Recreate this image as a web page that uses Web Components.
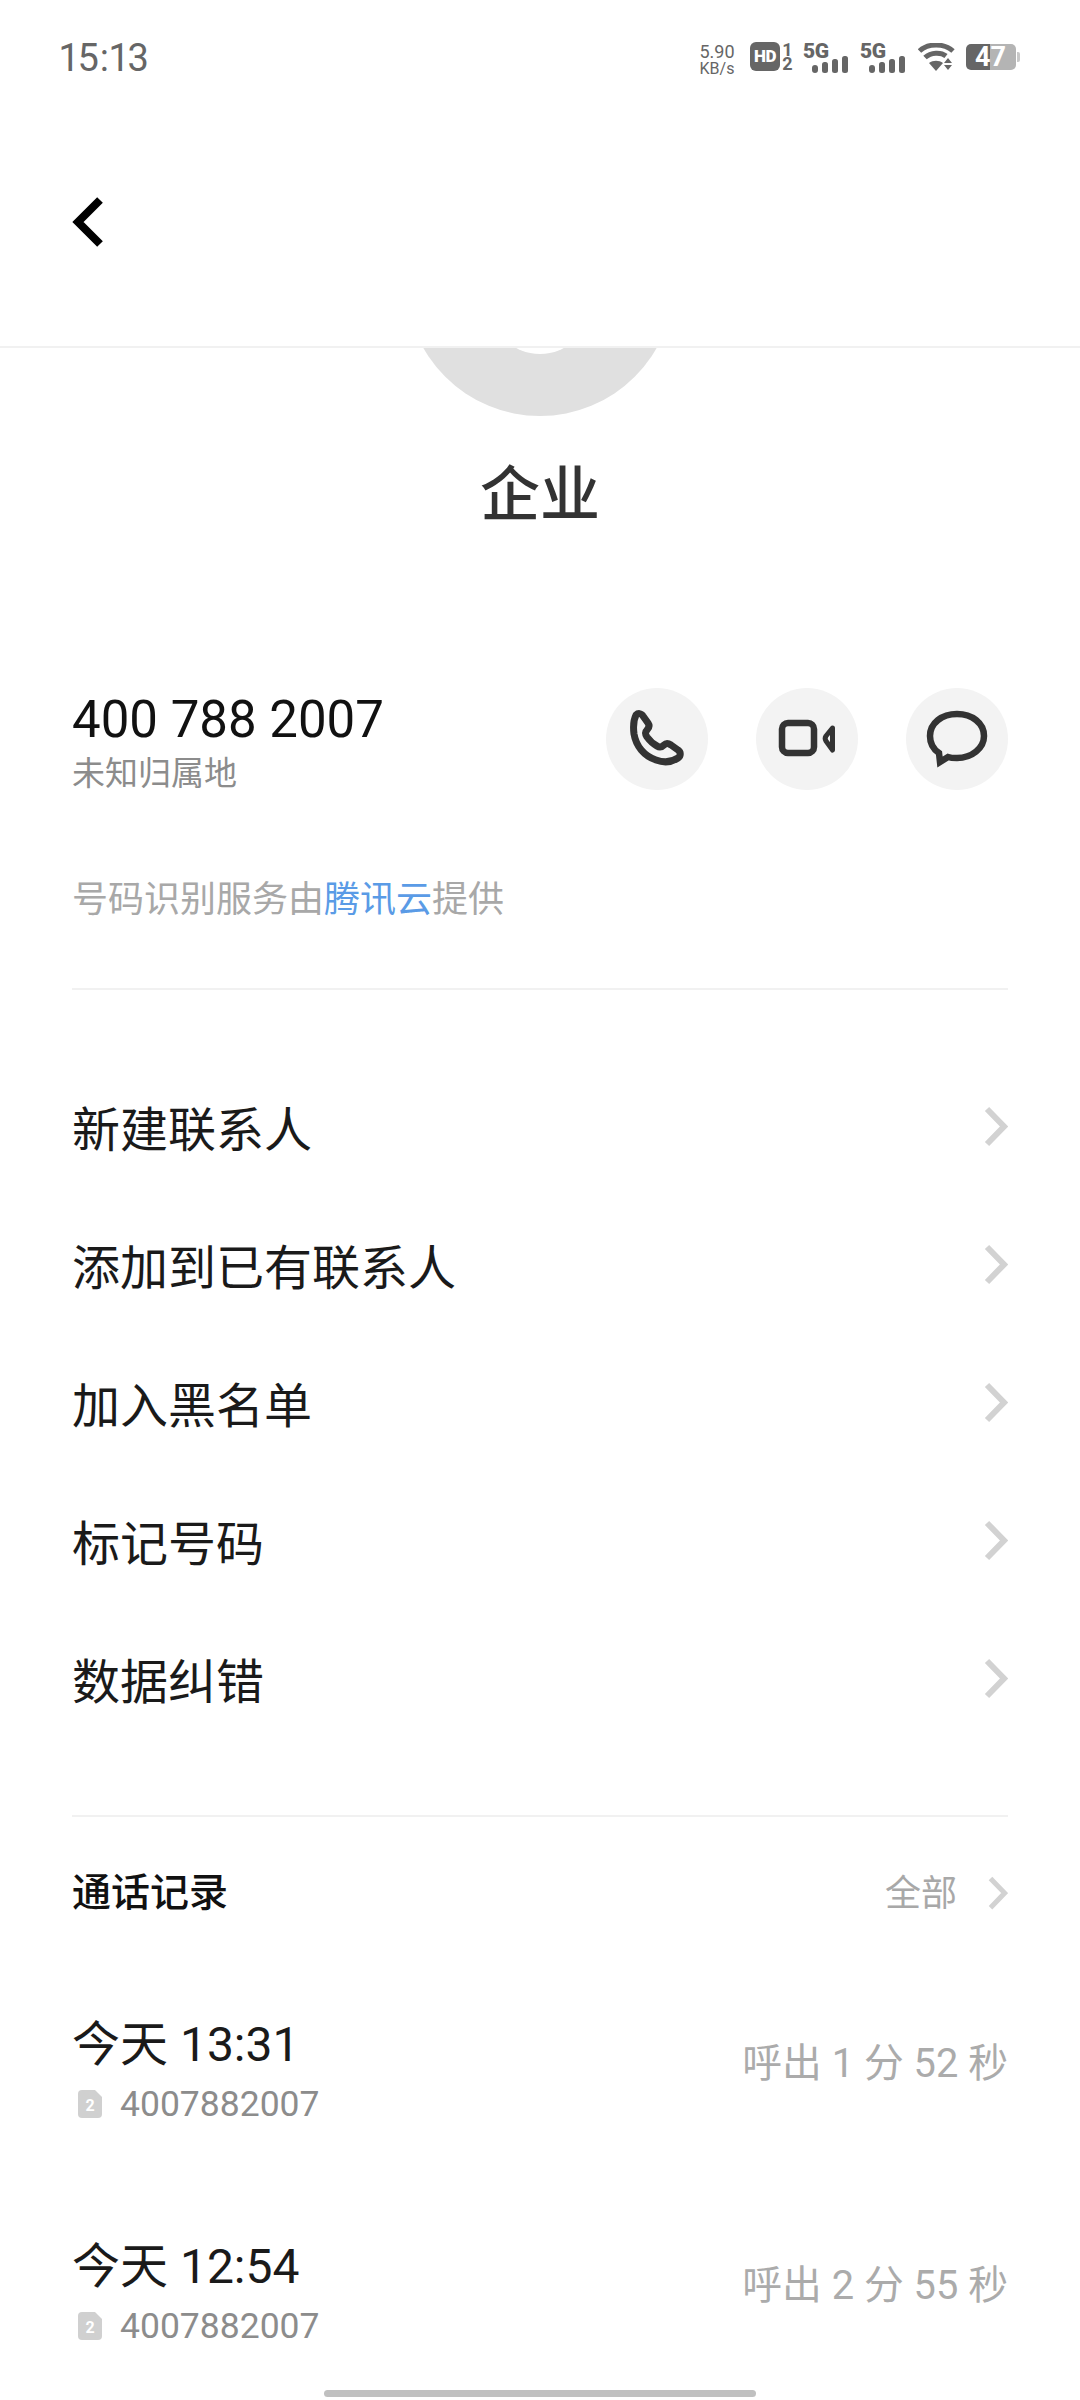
<!DOCTYPE html>
<html>
<head>
<meta charset="utf-8">
<style>
  html, body { margin: 0; background: #fff; }
  body { width: 1080px; height: 2400px; overflow: hidden; font-family: Roboto, "Noto Sans CJK SC", sans-serif; }
</style>
</head>
<body>
<app-status-bar></app-status-bar>
<nav-header></nav-header>
<contact-hero name="企业"></contact-hero>
<number-card number="400 788 2007" place="未知归属地"></number-card>
<menu-row label="新建联系人"></menu-row>
<menu-row label="添加到已有联系人"></menu-row>
<menu-row label="加入黑名单"></menu-row>
<menu-row label="标记号码"></menu-row>
<menu-row label="数据纠错"></menu-row>
<call-log>
  <call-item time="今天 13:31" number="4007882007" detail="呼出 1 分 52 秒"></call-item>
  <call-item time="今天 12:54" number="4007882007" detail="呼出 2 分 55 秒"></call-item>
</call-log>
<home-bar></home-bar>

<script>
const chevron = `<svg width="24" height="42" viewBox="0 0 24 42" fill="none" stroke="#d2d2d2" stroke-width="6"><path d="M3 3 L20 20.500 L3 38"/></svg>`

function defineSimple(tag, html) {
  customElements.define(tag, class extends HTMLElement {
    constructor() {
      super()
      this.attachShadow({ mode: 'open' })
      const template = document.createElement('template')
      template.innerHTML = typeof html === 'function' ? html(this) : html
      this.shadowRoot.appendChild(template.content.cloneNode(true))
    }
  })
}

const signal = `
  <div class="sig">
    <span class="g">5G</span>
    <svg width="36" height="17" viewBox="0 0 36 17" fill="#666">
      <rect x="0" y="9" width="6" height="8" rx="3"/>
      <rect x="10" y="6" width="6" height="11" rx="2.5"/>
      <rect x="20" y="3" width="6" height="14" rx="2.5"/>
      <rect x="30" y="0" width="6" height="17" rx="2.5"/>
    </svg>
  </div>`

defineSimple('app-status-bar', `
  <style>
    :host { display: flex; height: 116px; box-sizing: border-box; padding: 38px 60px 0 60px; justify-content: space-between; align-items: flex-start; color: #666; }
    .time { font-size: 38px; line-height: 40px; font-variant-numeric: proportional-nums; letter-spacing: 1px; }
    .icons { display: flex; align-items: flex-start; padding-top: 4px; }
    .speed { width: 42px; margin-right: 12px; text-align: center; font-size: 18px; line-height: 19px; }
    .speed small { display: block; font-size: 16px; line-height: 16px; }
    .hd { width: 30px; height: 29px; border-radius: 6px; background: #666; color: #fff; font-size: 17px; font-weight: 900; line-height: 29px; text-align: center; letter-spacing: -.5px; }
    .sim { width: 13px; margin: 1px 9px 0 1px; font-size: 18px; font-weight: 700; line-height: 14px; text-align: center; }
    .sig { position: relative; width: 45px; height: 31px; margin-right: 12px; }
    .g { position: absolute; left: 0; top: -2px; font-size: 21px; font-weight: 900; line-height: 22px; letter-spacing: -.5px; }
    .sig svg { position: absolute; right: 0; top: 14px; }
    .wifi { margin: 1px 11px 0 1px; }
    .battery { position: relative; margin-top: 2px; width: 54px; height: 26px; }
    .battery span { position: absolute; inset: 0 5px 0 0; text-align: center; color: #fff; font-size: 27px; font-weight: 700; line-height: 26px; }
  </style>
  <div class="time">15:13</div>
  <div class="icons">
    <div class="speed">5.90<small>KB/s</small></div>
    <div class="hd">HD</div>
    <div class="sim">1 2</div>
    ${signal}
    ${signal}
    <svg class="wifi" width="37" height="28" viewBox="0 0 37 28" fill="none" stroke="#666" stroke-width="5">
      <path d="M1.500 8 C10 0 26 0 35 8"/>
      <path d="M7 14.500 C13 9 23 9 28 13"/>
      <path d="M11 20 L18 28 L25 20 C21 17 15 17 11 20 Z" fill="#666" stroke="none"/>
      <path d="M30 15 L34 20 H26 Z M30 27 L26 22 H34 Z" fill="#666" stroke="none"/>
    </svg>
    <div class="battery">
      <svg width="54" height="26" viewBox="0 0 54 26">
        <path d="M5 0 H24 V26 H5 A5 5 0 0 1 0 21 V5 A5 5 0 0 1 5 0 Z" fill="#666"/>
        <path d="M24 0 H45 A5 5 0 0 1 50 5 V21 A5 5 0 0 1 45 26 H24 Z" fill="#b4b4b4"/>
        <path d="M51 8 H52 A2 2 0 0 1 54 10 V16 A2 2 0 0 1 52 18 H51 Z" fill="#c8c8c8"/>
      </svg>
      <span>47</span>
    </div>
  </div>
`)

defineSimple('nav-header', `
  <style>
    :host { display: block; height: 232px; box-sizing: border-box; border-bottom: 2px solid #f1f1f1; padding: 81px 0 0 72px; background: #fff; }
    svg { display: block; }
  </style>
  <svg width="32" height="50" viewBox="0 0 32 50" fill="none" stroke="#000" stroke-width="8"><path d="M28 3 L6 25 L28 47"/></svg>
`)

defineSimple('contact-hero', el => `
  <style>
    :host { display: flex; flex-direction: column; align-items: center; height: 320px; overflow: hidden; }
    .avatar { flex: none; position: relative; width: 268px; height: 268px; margin-top: -200px; border-radius: 50%; background: #e0e0e0; overflow: hidden; }
    .avatar i { position: absolute; left: 84px; top: 106px; width: 100px; height: 100px; border-radius: 50%; background: #fff; }
    .name { margin-top: 38px; font-size: 60px; font-weight: 500; line-height: 84px; color: #333; }
  </style>
  <div class="avatar"><i></i></div>
  <div class="name">${el.getAttribute('name')}</div>
`)

defineSimple('number-card', el => `
  <style>
    :host { display: block; margin: 0 72px; height: 322px; box-sizing: border-box; border-bottom: 2px solid #f1f1f1; }
    .top { display: flex; justify-content: space-between; padding-top: 20px; }
    .num { font-size: 51px; line-height: 58px; color: #111; margin-top: 3px; }
    .place { font-size: 33px; line-height: 44px; color: #8c8c8c; margin-top: 3px; }
    .actions { display: flex; gap: 48px; }
    .btn { width: 102px; height: 102px; border-radius: 50%; background: #f3f3f3; }
    .btn svg { display: block; }
    .note { margin-top: 82px; font-size: 36px; line-height: 44px; color: #a8a8a8; }
    .note b { font-weight: 400; color: #5a9be6; }
  </style>
  <div class="top">
    <div>
      <div class="num">${el.getAttribute('number')}</div>
      <div class="place">${el.getAttribute('place')}</div>
    </div>
    <div class="actions">
      <div class="btn"><svg width="102" height="102" viewBox="0 0 102 102" fill="none" stroke="#333" stroke-width="7" stroke-linejoin="round">
        <path d="M30 27 C32 25 35 25 37 28 L42 35 C44 38 43 40 41 42 C39 44 39 46 41 49 C44 53 47 56 51 58 C54 60 56 59 58 57 C60 55 62 55 65 57 L72 62 C75 64 75 68 72 70 C66 74 58 75 50 72 C38 68 30 58 28 46 C27 38 28 31 30 27 Z"/></svg></div>
      <div class="btn"><svg width="102" height="102" viewBox="0 0 102 102" fill="none" stroke="#333" stroke-width="6.500" stroke-linejoin="round">
        <rect x="26" y="35" width="32" height="30" rx="6"/>
        <path d="M76.500 40 L70 48 C69 49.500 69 51.500 70 53 L76.500 62 Z" stroke-width="5"/></svg></div>
      <div class="btn"><svg width="102" height="102" viewBox="0 0 102 102" fill="none" stroke="#333" stroke-width="6.500" stroke-linejoin="miter">
        <path d="M33 65 C27 61 24 55 24 48 C24 35 36 26 51 26 C66 26 78 35 78 48 C78 60 66 70 51 70 C47 70 45 70 42 69 L34 74 Z"/></svg></div>
    </div>
  </div>
  <div class="note">号码识别服务由<b>腾讯云</b>提供</div>
`)

defineSimple('menu-row', el => `
  <style>
    :host { display: flex; align-items: center; justify-content: space-between; height: 138px; margin: 0 72px; color: #1a1a1a; font-size: 48px; }
    :host(:first-of-type) { margin-top: 68px; }
    span { padding-bottom: 3px; }
    svg { display: block; }
  </style>
  <span>${el.getAttribute('label')}</span>
  ${chevron}
`)

defineSimple('call-log', `
  <style>
    :host { display: block; margin: 67px 72px 0; border-top: 2px solid #f1f1f1; }
    .head { display: flex; justify-content: space-between; align-items: center; height: 152px; }
    .title { font-size: 39px; font-weight: 500; color: #111; padding-bottom: 8px; }
    .all { display: flex; align-items: center; gap: 31px; font-size: 36px; color: #a8a8a8; }
    .all b { font-weight: 400; padding-bottom: 6px; }
    .all svg { display: block; width: 20px; height: 35px; }
  </style>
  <div class="head">
    <span class="title">通话记录</span>
    <span class="all"><b>全部</b>${chevron}</span>
  </div>
  <slot></slot>
`)

defineSimple('call-item', el => `
  <style>
    :host { display: flex; justify-content: space-between; align-items: center; height: 222px; box-sizing: border-box; padding-bottom: 20px; }
    .time { font-size: 48px; line-height: 60px; color: #1a1a1a; }
    .sub { display: flex; align-items: center; gap: 18px; margin-top: 7px; font-size: 35.5px; line-height: 44px; color: #8c8c8c; }
    .sim { margin-left: 6px; display: block; }
    .detail { font-size: 39.8px; color: #ababab; margin-bottom: 22px; }
  </style>
  <div>
    <div class="time">${el.getAttribute('time')}</div>
    <div class="sub">
      <svg class="sim" width="24" height="28" viewBox="0 0 24 28"><path d="M4 0 H17 L24 7 V24 A4 4 0 0 1 20 28 H4 A4 4 0 0 1 0 24 V4 A4 4 0 0 1 4 0 Z" fill="#d0d0d0"/><text x="12" y="21" text-anchor="middle" font-size="16" font-weight="700" fill="#fff" font-family="Roboto, sans-serif">2</text></svg>
      <span>${el.getAttribute('number')}</span>
    </div>
  </div>
  <div class="detail">${el.getAttribute('detail')}</div>
`)

defineSimple('home-bar', `
  <style>
    :host { position: absolute; left: 324px; top: 2390px; width: 432px; height: 7px; border-radius: 4px; background: #c0c0c0; }
  </style>
`)
</script>
</body>
</html>
